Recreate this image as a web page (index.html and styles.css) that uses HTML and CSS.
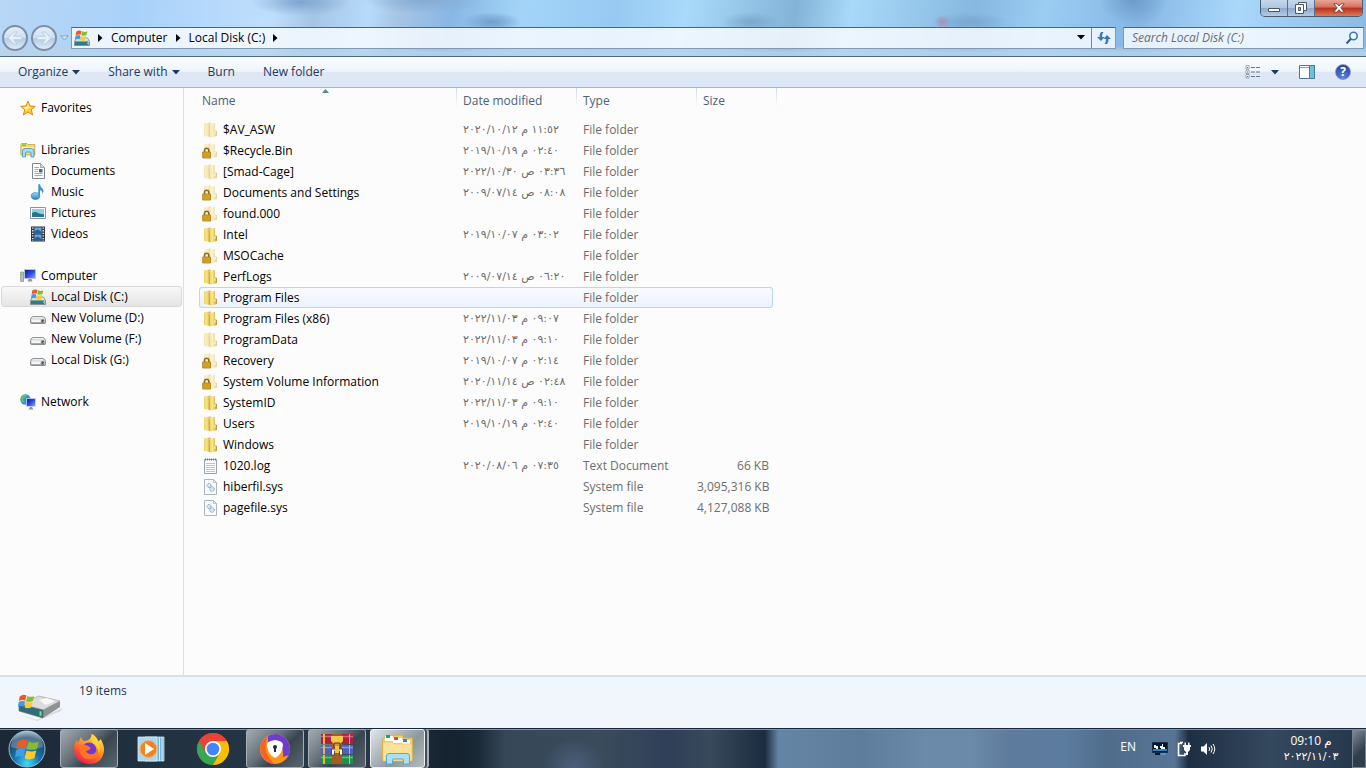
FILE: index.html
```html
<!DOCTYPE html>
<html lang="en">
<head>
    <meta charset="UTF-8">
    <meta name="viewport" content="width=device-width, initial-scale=1.0">
    <title>Local Disk (C:)</title>
    <link rel="stylesheet" href="styles.css">
</head>

<body>
    <svg class="sprite" aria-hidden="true">
        <defs>
            <linearGradient id="gold" x1="0" x2="1"><stop offset="0" stop-color="#efd463"/><stop offset=".45" stop-color="#f8e48a"/><stop offset="1" stop-color="#c79c2b"/></linearGradient>
            <linearGradient id="steel" x1="0" x2="0" y1="0" y2="1"><stop offset="0" stop-color="#fafafa"/><stop offset="1" stop-color="#9a9da0"/></linearGradient>
            <linearGradient id="sky" x1="0" x2="0" y1="0" y2="1"><stop offset="0" stop-color="#9fd8f8"/><stop offset="1" stop-color="#2a83c4"/></linearGradient>
            <linearGradient id="screen" x1="0" x2="1" y1="0" y2="1"><stop offset="0" stop-color="#0a1a9a"/><stop offset=".5" stop-color="#2c49dd"/><stop offset="1" stop-color="#8db4ff"/></linearGradient>
            <linearGradient id="fire" x1=".8" x2=".2" y1="0" y2="1"><stop offset="0" stop-color="#fff14a"/><stop offset=".4" stop-color="#ff9a1f"/><stop offset=".75" stop-color="#ff4438"/><stop offset="1" stop-color="#e6155f"/></linearGradient>
            <radialGradient id="orb" cx=".5" cy=".9" r=".9"><stop offset="0" stop-color="#3fdcff"/><stop offset=".4" stop-color="#1773ad"/><stop offset=".8" stop-color="#1e4666"/><stop offset="1" stop-color="#8fb4cb"/></radialGradient>
        </defs>
        <symbol id="flag" viewBox="0 0 20 20">
            <path fill="#ee5a24" d="M2 4Q6 1 10 3L8.500 9Q5 7.500 1 9.500Z"/>
            <path fill="#84bd2f" d="M11 3.500Q15 5.500 19 3.500L17.500 9.500Q13 11 9.500 9.500Z"/>
            <path fill="#3f9ce5" d="M.8 10.500Q5 8.500 8.300 10.200L6.800 16Q3 14.500 0 16.500Z"/>
            <path fill="#ffc928" d="M9.200 10.700Q13 12.500 17 10.700L15.500 17Q11 19 7.700 16.700Z"/>
        </symbol>
        <symbol id="folder" viewBox="0 0 16 16">
            <path fill="url(#gold)" d="M2 1.500 8.500 .5V15L2 14Z"/>
            <path fill="url(#gold)" d="M7 2 13 1V8L15 9V14L8 15.700Z"/>
            <path stroke="#c39c35" stroke-width=".6" d="M7.500 3V15"/>
            <path stroke="#aa8a40" stroke-width=".8" d="M14 9V12.500"/>
            <path fill="#fffbe0" d="M12.500 9H13.500V12H12.500Z"/>
        </symbol>
        <symbol id="folder-hidden" viewBox="0 0 16 16">
            <use href="#folder" opacity=".5"/>
        </symbol>
        <symbol id="folder-locked" viewBox="0 0 16 16">
            <use href="#folder" opacity=".4"/>
            <path fill="none" stroke="#8b6b20" stroke-width="1.600" d="M2.500 9.500V7A2.200 2.200 0 0 1 6.800 7V9.500"/>
            <path fill="#e5ae20" stroke="#a37a1c" stroke-width=".8" d="M.7 9H8.500V15H.7Z"/>
            <path stroke="#b98a20" stroke-width=".8" d="M1 11H8M1 13H8"/>
        </symbol>
        <symbol id="textfile" viewBox="0 0 16 16">
            <path fill="#fafdff" stroke="#8d979f" stroke-width=".9" d="M2.500 1.500H14.500V15.500H2.500Z"/>
            <path stroke="#a3bacd" stroke-width=".8" d="M4 5.500H13M4 7.500H13M4 9.500H13M4 11.500H13M4 13.500H13"/>
            <path stroke="#70777e" stroke-dasharray="1 1" stroke-width="2" d="M3 1.500H14"/>
        </symbol>
        <symbol id="sysfile" viewBox="0 0 16 16">
            <path fill="#fbfcfd" stroke="#a5adb5" stroke-width=".9" d="M2.500.5H11.500L14.500 3.500V15.500H2.500Z"/>
            <path fill="none" stroke="#a5adb5" stroke-width=".7" d="M11.500.5V3.500H14.500"/>
            <circle cx="7" cy="6.500" r="2" fill="#d9e8f6" stroke="#6f97c6" stroke-dasharray="1 .5"/>
            <circle cx="10" cy="10" r="2.300" fill="#d9e8f6" stroke="#6f97c6" stroke-dasharray="1 .5"/>
        </symbol>
        <symbol id="star" viewBox="0 0 16 16">
            <path fill="#ffcb38" stroke="#e38422" d="M8 1 10 6 15.300 6.300 11.200 9.700 12.700 15 8 12 3.300 15 4.800 9.700.7 6.300 6 6Z"/>
            <path fill="#fff3a0" d="M8 3.500 9 7 12 7.300 8 8.500 5 12 5.800 9.500 3.300 7.200 6.700 7Z"/>
        </symbol>
        <symbol id="libraries" viewBox="0 0 16 16">
            <path fill="#f4d874" stroke="#c5a23f" stroke-width=".8" d="M.8 3V13H14.800V2.500H8L7 1.500H1.500Z"/>
            <path fill="#70b95d" d="M2 2.500H6V4H2Z"/>
            <path fill="#fdf2b6" d="M2 5H14V8H2Z"/>
            <path fill="#a5dcf6" stroke="#3f93c5" stroke-width=".8" d="M2.500 15V9Q2.500 6.500 5 6.500H11.500Q14 6.500 14 9V15H11V11Q11 10 10 10H6.500Q5.500 10 5.500 11V15Z"/>
        </symbol>
        <symbol id="documents" viewBox="0 0 16 16">
            <path fill="#fff" stroke="#7d8790" d="M2.500.5H10.500L14.500 4.500V15.500H2.500Z"/>
            <path fill="#dce3ea" stroke="#7d8790" stroke-width=".7" d="M10.500.5V4.500H14.500"/>
            <path stroke="#7f95aa" stroke-width=".8" d="M4.500 4.500H9M4.500 6.500H8M4.500 8.500H8M4.500 10.500H12.500M4.500 12.500H12.500"/>
            <path fill="#3c6f9f" d="M9 6H12.500V9.500H9Z"/>
        </symbol>
        <symbol id="music" viewBox="0 0 16 16">
            <ellipse cx="5.500" cy="12" rx="4.300" ry="3.400" fill="url(#sky)" stroke="#2079b2" stroke-width=".6"/>
            <path fill="#3098d7" d="M8.300 12V.3H10Q10.300 3 12.500 4.500Q14.500 7 12.300 10Q12.800 7 10 6V12Z"/>
        </symbol>
        <symbol id="pictures" viewBox="0 0 16 16">
            <path fill="#fff" stroke="#8b959e" d="M.5 2.500H15.500V13.500H.5Z"/>
            <path fill="#8bd0f3" d="M2 4H14V12H2Z"/>
            <path fill="#2a7a66" d="M2 8Q5 6 8 8Q11 9.500 14 9V12H2Z"/>
            <path fill="#2374af" d="M2 10.500Q8 9.500 14 10.500V12H2Z"/>
        </symbol>
        <symbol id="videos" viewBox="0 0 16 16">
            <path fill="#30373d" d="M1 .5H15V15.500H1Z"/>
            <path fill="#5ca9e4" d="M4.500 1.500H11.500V7.500H4.500ZM4.500 8.500H11.500V14.500H4.500Z"/>
            <path fill="#2b5d9b" d="M4.500 5 8 3.500 11.500 6V7.500H4.500ZM4.500 12 8 10.500 11.500 13V14.500H4.500Z"/>
            <path stroke="#fff" stroke-dasharray="1.300 1.300" stroke-width="1.300" d="M2.800 1.500V15M13.200 1.500V15"/>
        </symbol>
        <symbol id="computer" viewBox="0 0 16 16">
            <path fill="#bcc4c3" stroke="#7b8784" stroke-width=".7" d="M.7 4H3.500V13.500H.7Z"/>
            <path fill="#62bd50" d="M1.300 6H2.700V7H1.300Z"/>
            <path fill="url(#screen)" stroke="#bac3d5" d="M4.500 1.500H15.500V10.500H4.500Z"/>
            <path fill="#8d97a6" d="M8.500 11H11.500L12.500 13.500H7.500Z"/>
        </symbol>
        <symbol id="osdrive" viewBox="0 0 16 16">
            <path fill="url(#steel)" stroke="#6d7678" stroke-width=".7" d="M2.500 8H13.500L15.500 11.500V15.500H.5V11.500Z"/>
            <path fill="#2e7c87" d="M1 11.500H14V15H1Z"/>
            <path fill="#7be05d" d="M13 12.500H14.500V14H13Z"/>
            <use href="#flag" x="1" y="-1" width="13" height="13"/>
        </symbol>
        <symbol id="drive" viewBox="0 0 16 16">
            <path fill="url(#steel)" stroke="#777d81" stroke-width=".8" d="M3 6.500H13Q15.500 7.500 15.500 9.500V12.500Q15.500 13.500 14.500 13.500H1.500Q.5 13.500.5 12.500V9.500Q.5 7.500 3 6.500Z"/>
            <path fill="#f5f6f6" d="M1.500 9.500H10.500V12H1.500Z"/>
            <path fill="#51575b" d="M11.500 9.500H14V12.500H11.500Z"/>
            <path fill="#75d05c" d="M13 11H14V12H13Z"/>
        </symbol>
        <symbol id="network" viewBox="0 0 16 16">
            <circle cx="5.500" cy="5.500" r="5.200" fill="#2d93d2"/>
            <path fill="#5fc35a" d="M1 4Q3 0 7 1L5 4 3 5 4 8 2 8.500ZM7 5 10 4V7L7 9Z"/>
            <path fill="url(#screen)" stroke="#ced6e8" stroke-width=".8" d="M6.500 4.500H15.500V12.500H6.500Z"/>
            <path fill="#8d97a6" d="M10 13H12L13.500 15.500H8.500Z"/>
        </symbol>
    </svg>

    <header class="titlebar">
        <div class="window-buttons">
            <button class="win-btn" aria-label="Minimize"><svg width="14" height="12" viewBox="0 0 14 12"><path fill="#fff" stroke="#4c5566" d="M1.500 6.500H12.500V9.500H1.500Z"/></svg></button>
            <button class="win-btn" aria-label="Restore"><svg width="12" height="12" viewBox="0 0 12 12"><path fill="#fff" stroke="#4c5566" d="M3.500.5H11.500V8.500H8.500V11.500H.5V2.500H3.500Z"/><path fill="#9fb6d3" stroke="#4c5566" d="M3.500 5.500H5.500V8.500H3.500Z"/><path fill="none" stroke="#4c5566" d="M3.500 2.500H8.500V8.500"/></svg></button>
            <button class="win-btn win-close" aria-label="Close"><svg width="12" height="10" viewBox="0 0 12 10"><path fill="#fff" stroke="#5f3030" stroke-width=".8" d="M.8.800H4L6 3 8 .8H11.200L7.800 4.800 11.300 9.200H8L6 6.700 4 9.200H.7L4.200 4.800Z"/></svg></button>
        </div>
        <div class="nav-row">
            <div class="history">
                <button class="round-btn" aria-label="Back"><svg width="16" height="16" viewBox="0 0 16 16"><path fill="#e6f0fa" stroke="#b3c6d9" stroke-width=".7" d="M1 8 7 2H10L6.500 6.300H15V9.700H6.500L10 14H7Z"/></svg></button>
                <button class="round-btn" aria-label="Forward"><svg width="16" height="16" viewBox="0 0 16 16"><path fill="#e6f0fa" stroke="#b3c6d9" stroke-width=".7" d="M15 8 9 2H6L9.500 6.300H1V9.700H9.500L6 14H9Z"/></svg></button>
                <button class="plain-btn" aria-label="Recent pages"><svg width="9" height="6" viewBox="0 0 9 6"><path fill="#cfe0f0" stroke="#7e9ab5" stroke-width=".8" d="M.8.800H8.200L4.500 5Z"/></svg></button>
            </div>
            <div class="address">
                <svg class="icon address-icon"><use href="#osdrive"/></svg>
                <svg class="crumb-arrow" viewBox="0 0 5 8"><path d="M0 0 4.500 4 0 8Z"/></svg>
                <a class="crumb" href="#">Computer</a>
                <svg class="crumb-arrow" viewBox="0 0 5 8"><path d="M0 0 4.500 4 0 8Z"/></svg>
                <a class="crumb" href="#">Local Disk (C:)</a>
                <svg class="crumb-arrow" viewBox="0 0 5 8"><path d="M0 0 4.500 4 0 8Z"/></svg>
                <button class="plain-btn address-drop" aria-label="Previous locations"><svg width="8" height="5" viewBox="0 0 8 5"><path d="M0 0H8L4 4.500Z"/></svg></button>
                <button class="plain-btn refresh" aria-label="Refresh"><svg width="14" height="14" viewBox="0 0 14 14"><path fill="#3679b4" d="M4 1H6.500Q4.800 3 5 6H7.500L4 10 0 6H2.500Q2.300 3 4 1ZM10 13H7.500Q9.200 11 9 8H6.500L10 4 14 8H11.500Q11.700 11 10 13Z"/></svg></button>
            </div>
            <form class="search">
                <input type="text" aria-label="Search" placeholder="Search Local Disk (C:)">
                <button type="button" class="plain-btn" aria-label="Go"><svg width="14" height="14" viewBox="0 0 14 14"><circle cx="8.500" cy="5" r="3.700" fill="#eef7ff" stroke="#3579b8" stroke-width="1.600"/><path stroke="#2c5f95" stroke-width="2" d="M6 7.800 1.500 12.500"/></svg></button>
            </form>
        </div>
    </header>

    <div class="toolbar">
        <button class="tool">Organize <svg class="tool-arrow" viewBox="0 0 8 5"><path d="M0 0H8L4 4.500Z"/></svg></button>
        <button class="tool">Share with <svg class="tool-arrow" viewBox="0 0 8 5"><path d="M0 0H8L4 4.500Z"/></svg></button>
        <button class="tool">Burn</button>
        <button class="tool">New folder</button>
        <div class="tool-right">
            <button class="tool tool-view" aria-label="Change view"><svg width="16" height="14" viewBox="0 0 16 14"><path fill="#fff" stroke="#8793a5" stroke-width=".8" d="M1 .5H4V4H1ZM1 5H4V8.500H1ZM1 9.500H4V13H1Z"/><path stroke="#526f9b" d="M2 2.500H3M2 7H3M2 11.500H3"/><path stroke="#67788f" stroke-dasharray="4 1" d="M6 2.500H16M6 7H16M6 11.500H16"/></svg><svg class="tool-arrow" viewBox="0 0 8 5"><path d="M0 0H8L4 4.500Z"/></svg></button>
            <button class="tool" aria-label="Show the preview pane"><svg width="16" height="14" viewBox="0 0 16 14"><path fill="#fff" stroke="#5b7293" d="M.5.5H15.500V13.500H.5Z"/><path fill="#72bfdc" stroke="#427c9f" d="M10.500.5H15.500V13.500H10.500Z"/><path stroke="#8ba3c0" d="M1 2.500H10"/></svg></button>
            <button class="help" aria-label="Get help">?</button>
        </div>
    </div>

    <main class="main">
        <nav class="sidebar">
            <a class="side-item" href="#"><svg class="icon"><use href="#star"/></svg>Favorites</a>
            <div class="side-group">
                <a class="side-item" href="#"><svg class="icon"><use href="#libraries"/></svg>Libraries</a>
                <a class="side-item child" href="#"><svg class="icon"><use href="#documents"/></svg>Documents</a>
                <a class="side-item child" href="#"><svg class="icon"><use href="#music"/></svg>Music</a>
                <a class="side-item child" href="#"><svg class="icon"><use href="#pictures"/></svg>Pictures</a>
                <a class="side-item child" href="#"><svg class="icon"><use href="#videos"/></svg>Videos</a>
            </div>
            <div class="side-group">
                <a class="side-item" href="#"><svg class="icon"><use href="#computer"/></svg>Computer</a>
                <a class="side-item child selected" href="#"><svg class="icon"><use href="#osdrive"/></svg>Local Disk (C:)</a>
                <a class="side-item child" href="#"><svg class="icon"><use href="#drive"/></svg>New Volume (D:)</a>
                <a class="side-item child" href="#"><svg class="icon"><use href="#drive"/></svg>New Volume (F:)</a>
                <a class="side-item child" href="#"><svg class="icon"><use href="#drive"/></svg>Local Disk (G:)</a>
            </div>
            <div class="side-group">
                <a class="side-item" href="#"><svg class="icon"><use href="#network"/></svg>Network</a>
            </div>
        </nav>

        <section class="content">
            <table class="files">
                <colgroup><col class="col-name"><col class="col-date"><col class="col-type"><col class="col-size"><col class="col-end"></colgroup>
                <thead>
                    <tr>
                        <th>Name<svg class="sort" viewBox="0 0 7 4"><path d="M3.500 0 7 4H0Z"/></svg></th>
                        <th>Date modified</th>
                        <th>Type</th>
                        <th colspan="2">Size</th>
                    </tr>
                </thead>
                <tbody>
                    <tr><td><svg class="icon"><use href="#folder-hidden"/></svg>$AV_ASW</td><td class="date">١١:٥٢ م ٢٠٢٠/١٠/١٢</td><td>File folder</td><td class="size"></td></tr>
                    <tr><td><svg class="icon"><use href="#folder-locked"/></svg>$Recycle.Bin</td><td class="date">٠٢:٤٠ م ٢٠١٩/١٠/١٩</td><td>File folder</td><td class="size"></td></tr>
                    <tr><td><svg class="icon"><use href="#folder-hidden"/></svg>[Smad-Cage]</td><td class="date">٠٣:٣٦ ص ٢٠٢٢/١٠/٣٠</td><td>File folder</td><td class="size"></td></tr>
                    <tr><td><svg class="icon"><use href="#folder-locked"/></svg>Documents and Settings</td><td class="date">٠٨:٠٨ ص ٢٠٠٩/٠٧/١٤</td><td>File folder</td><td class="size"></td></tr>
                    <tr><td><svg class="icon"><use href="#folder-locked"/></svg>found.000</td><td class="date"></td><td>File folder</td><td class="size"></td></tr>
                    <tr><td><svg class="icon"><use href="#folder"/></svg>Intel</td><td class="date">٠٣:٠٢ م ٢٠١٩/١٠/٠٧</td><td>File folder</td><td class="size"></td></tr>
                    <tr><td><svg class="icon"><use href="#folder-locked"/></svg>MSOCache</td><td class="date"></td><td>File folder</td><td class="size"></td></tr>
                    <tr><td><svg class="icon"><use href="#folder"/></svg>PerfLogs</td><td class="date">٠٦:٢٠ ص ٢٠٠٩/٠٧/١٤</td><td>File folder</td><td class="size"></td></tr>
                    <tr class="hovered"><td><svg class="icon"><use href="#folder"/></svg>Program Files</td><td class="date"></td><td>File folder</td><td class="size"></td></tr>
                    <tr><td><svg class="icon"><use href="#folder"/></svg>Program Files (x86)</td><td class="date">٠٩:٠٧ م ٢٠٢٢/١١/٠٣</td><td>File folder</td><td class="size"></td></tr>
                    <tr><td><svg class="icon"><use href="#folder-hidden"/></svg>ProgramData</td><td class="date">٠٩:١٠ م ٢٠٢٢/١١/٠٣</td><td>File folder</td><td class="size"></td></tr>
                    <tr><td><svg class="icon"><use href="#folder-locked"/></svg>Recovery</td><td class="date">٠٢:١٤ م ٢٠١٩/١٠/٠٧</td><td>File folder</td><td class="size"></td></tr>
                    <tr><td><svg class="icon"><use href="#folder-locked"/></svg>System Volume Information</td><td class="date">٠٢:٤٨ ص ٢٠٢٠/١١/١٤</td><td>File folder</td><td class="size"></td></tr>
                    <tr><td><svg class="icon"><use href="#folder"/></svg>SystemID</td><td class="date">٠٩:١٠ م ٢٠٢٢/١١/٠٣</td><td>File folder</td><td class="size"></td></tr>
                    <tr><td><svg class="icon"><use href="#folder"/></svg>Users</td><td class="date">٠٢:٤٠ م ٢٠١٩/١٠/١٩</td><td>File folder</td><td class="size"></td></tr>
                    <tr><td><svg class="icon"><use href="#folder"/></svg>Windows</td><td class="date"></td><td>File folder</td><td class="size"></td></tr>
                    <tr><td><svg class="icon"><use href="#textfile"/></svg>1020.log</td><td class="date">٠٧:٣٥ م ٢٠٢٠/٠٨/٠٦</td><td>Text Document</td><td class="size">66 KB</td></tr>
                    <tr><td><svg class="icon"><use href="#sysfile"/></svg>hiberfil.sys</td><td class="date"></td><td>System file</td><td class="size">3,095,316 KB</td></tr>
                    <tr><td><svg class="icon"><use href="#sysfile"/></svg>pagefile.sys</td><td class="date"></td><td>System file</td><td class="size">4,127,088 KB</td></tr>
                </tbody>
            </table>
        </section>
    </main>

    <footer class="details">
        <svg class="details-icon" viewBox="0 0 46 30">
            <path fill="#c9c9c9" d="M4 24 20 29 45 17 44 20 20 30Z" opacity=".6"/>
            <path fill="#dcdcdc" stroke="#9a9a9a" stroke-width=".6" d="M2 13 22 5 43 10 26 19Z"/>
            <path fill="#8f9294" d="M26 19 43 10V16L26 27Z"/>
            <path fill="#2c6f7b" stroke="#666" stroke-width=".6" d="M2 13 26 19V27L2 20Z"/>
            <path fill="#8be26a" d="M22.500 20 24.500 20.500V25L22.500 24.500Z"/>
            <path fill="#f8f8f8" d="M22 9 30 7 38 10 29 14Z"/>
            <use href="#flag" x="1" y="2" width="17" height="17"/>
        </svg>
        <span class="count">19 items</span>
    </footer>

    <div class="taskbar">
        <button class="start" aria-label="Start">
            <svg width="38" height="38" viewBox="0 0 38 38"><circle cx="19" cy="19" r="18" fill="url(#orb)" stroke="#9bb9cc"/><path fill="#fff" opacity=".25" d="M3 17A16 16 0 0 1 35 17Q19 22 3 17Z"/><use href="#flag" x="7" y="7" width="25" height="25"/></svg>
        </button>
        <button class="task open" aria-label="Firefox">
            <svg width="32" height="32" viewBox="0 0 32 32">
                <path fill="url(#fire)" d="M19 1Q24 4 25 8Q27 8 27.500 6Q31.500 12 31 18Q29 31 16 31Q3 30 1 18Q.5 11 4 7L5 10 8 4Q9 8 12 8Q18 7 19 1Z"/>
                <circle cx="16" cy="17" r="7.500" fill="#7139d8"/>
                <path fill="#ff7420" d="M6 13Q10 10 15 13L18 15Q16 18 13 18Q15 22 20 21Q24 19 24 15Q27 20 23 24Q17 28 11 25Q6 21 6 13Z"/>
                <path fill="#ffd33a" d="M19 1Q24 4 25 9Q28 14 26 20Q25 12 19 9Q17 6 19 1Z"/>
            </svg>
        </button>
        <button class="task" aria-label="Media Player">
            <svg width="28" height="28" viewBox="0 0 28 28"><path fill="#75b5dc" stroke="#cbe5f4" stroke-width=".8" d="M8 2H27V26H8Z"/><path stroke="#d7effa" d="M22.500 2V26M25 2V26"/><path fill="#a8d7f0" stroke="#d7effa" stroke-width=".8" d="M1 2H20V26H1Z"/><circle cx="11.500" cy="14" r="8.500" fill="#f48220" stroke="#ffb26c"/><path fill="#fff" d="M8 8 17 14 8 20Z"/></svg>
        </button>
        <button class="task" aria-label="Chrome">
            <svg width="34" height="34" viewBox="0 0 34 34"><circle cx="17" cy="17" r="16" fill="#ea4335"/><path fill="#34a853" d="M3.140 9A16 16 0 0 0 17 33L23.900 21 10.100 21Z"/><path fill="#fbbc05" d="M17 33A16 16 0 0 0 30.860 9L17 9 23.900 21Z"/><path fill="#ea4335" d="M3.140 9A16 16 0 0 1 30.860 9H17L10.100 21Z"/><circle cx="17" cy="17" r="8" fill="#fff"/><circle cx="17" cy="17" r="6.300" fill="#4285f4"/></svg>
        </button>
        <button class="task open" aria-label="Secure Browser">
            <svg width="32" height="32" viewBox="0 0 32 32"><circle cx="16" cy="16" r="15" fill="#ff941d"/><path fill="#6e3cce" d="M9 3Q19-2 27 6Q33 13 30 22L24 24Q26 9 9 9Z"/><path fill="#f56425" d="M9 3Q-1 9 2 20Q5 29 15 31L9 23Q4 15 9 3Z"/><path fill="#fff" d="M16 7Q24 8 24 12Q23 22 16 25Q9 22 8 12Q8 8 16 7Z"/><circle cx="16" cy="14" r="2" fill="#242743"/><path fill="#242743" d="M15 14H17V19H15Z"/></svg>
        </button>
        <button class="task open" aria-label="WinRAR">
            <svg width="34" height="32" viewBox="0 0 34 32"><path fill="#b51d3c" d="M1 1H33V11H1Z"/><path fill="#4d5fc7" d="M1 12H33V21H1Z"/><path fill="#1d9147" d="M1 22H33V31H1Z"/><path stroke="#fff" opacity=".35" stroke-width="1.500" d="M1 3.500H33M1 14.500H33M1 24.500H33"/><path fill="#e7bb34" d="M3 1H5V11H3ZM3 12H5V21H3ZM3 22H5V31H3ZM29 1H30V11H29ZM29 12H30V21H29ZM29 22H30V31H29Z"/><path fill="#a85b24" d="M12 1H22V31H12Z"/><path fill="#f6c749" d="M11 3H23V8L20 11H14L11 8Z"/><path fill="#d4932d" stroke="#5c3510" d="M14 10H20V15H14Z"/><path fill="#f5f5f5" stroke="#505050" d="M11.500 16V22H14.500V18H19.500V22H22.500V16Z"/><path fill="#efc442" d="M15 13H19V20H15Z"/></svg>
        </button>
        <button class="task open active" aria-label="Explorer">
            <svg width="34" height="32" viewBox="0 0 34 32"><path fill="#f0cf70" stroke="#d3ac4b" d="M1.500 6V27H31.500V5H23L21 2H13L11 4H4L2 6Z"/><path fill="#fff" d="M4 3H12V8H4ZM12 5H21V10H12ZM21 7H29V11H21Z"/><path fill="#29a252" d="M5 2H9V5H5Z"/><path fill="#d85032" d="M13 4H17V7H13Z"/><path fill="#3089cc" d="M22 6H26V9H22Z"/><path fill="#fbe29b" stroke="#e2c067" stroke-width=".6" d="M2 9H11L13 11H31V28H2Z"/><path fill="#a9e1f5" stroke="#57abc9" d="M5.500 31V23Q5.500 20.500 8 20.500H26Q28.500 20.500 28.500 23V31H22.500V27Q22.500 26 21 26H13Q11.500 26 11.500 27V31Z"/></svg>
        </button>
        <div class="tray">
            <button class="lang">EN</button>
            <div class="tray-icons">
                <svg width="16" height="14" viewBox="0 0 16 14"><path fill="#081522" stroke="#16304a" d="M.5.5H15.500V10.500H.5Z"/><path fill="#2684ca" d="M1 7H15V9H1Z"/><path fill="#e5f6ff" d="M2 3H4V4H6V7H4V6H2ZM8 4H10V2H11V5H13V7H9V6H8Z"/><path fill="#0b1118" d="M3 11H8V13H3Z"/><path fill="#3f9ade" d="M9 11H14V13H9Z"/></svg>
                <svg width="14" height="16" viewBox="0 0 14 16"><path fill="none" stroke="#fff" stroke-width="1.600" d="M5 2.500H1.500V14.500H8V12M3 1.500H6"/><path fill="#fff" d="M6 4H7.500V1.500H9V4H11V1.500H12.500V4H14V6H13V9L11 11V14H9V11L7 9V6H6Z"/></svg>
                <svg width="16" height="16" viewBox="0 0 16 16"><path fill="#fff" d="M1 5.500H3.500L7 2V14L3.500 10.500H1Z"/><path fill="none" stroke="#fff" d="M9 6Q10.500 8 9 10M11 4.500Q13.500 8 11 11.500M13 3Q16.500 8 13 13"/></svg>
            </div>
            <div class="clock"><span>09:10 م</span><span class="clock-date">٢٠٢٢/١١/٠٣</span></div>
            <button class="show-desktop" aria-label="Show desktop"></button>
        </div>
    </div>
</body>
</html>
```
FILE: styles.css
```css
* {
    box-sizing: border-box;
}

body {
    margin: 0;
    height: 100vh;
    display: flex;
    flex-direction: column;
    overflow: hidden;
    font-family: "Open Sans", "DejaVu Sans", sans-serif;
    font-size: 12px;
    line-height: 16px;
    color: #000;
    background: #fcfcfc;
}

button,
input {
    font: inherit;
    color: inherit;
    margin: 0;
    padding: 0;
    border: none;
    background: none;
}

a {
    color: inherit;
    text-decoration: none;
}

svg {
    flex: none;
}

.sprite {
    position: absolute;
    width: 0;
    height: 0;
}

.icon {
    width: 16px;
    height: 16px;
}

.plain-btn {
    display: flex;
    align-items: center;
    justify-content: center;
}

/* title bar */
.titlebar {
    height: 57px;
    flex: none;
    display: flex;
    flex-direction: column;
    border-bottom: 1px solid #51698a;
    background:
        radial-gradient(ellipse 50px 14px at 22% 2px, #7fa6d0, transparent),
        radial-gradient(ellipse 60px 14px at 31% 0, #86abd3, transparent),
        radial-gradient(ellipse 30px 10px at 36% 22px, #6d9dc9, transparent),
        radial-gradient(ellipse 30px 10px at 55% 22px, #7aa8ce, transparent),
        radial-gradient(ellipse 8px 7px at 69% 22px, #a890b5, transparent),
        radial-gradient(ellipse 40px 10px at 71% 22px, #78a8d1, transparent),
        radial-gradient(ellipse 35px 26px at 83% 0, #6e9cca, transparent),
        linear-gradient(to bottom, transparent 46px, rgba(184, 212, 233, 0.8) 52px),
        linear-gradient(100deg, #b8d6f5 0, #a9d2fa 10%, #c0defc 20%, #a5c5e5 23%, #b8dafa 27%, #a7c6e6 29%, #88b7e4 33%, #a3d4f8 38%, #98c9f1 45%, #a9dafa 50%, #83b3d7 58%, #a8d9f9 62%, #86b8e0 71%, #9bcdf3 76%, #86b7e5 83%, #aad8fa 90%, #8cb9e3 100%);
}

.window-buttons {
    display: flex;
    align-self: flex-end;
    height: 18px;
    margin-right: 3px;
    border: 1px solid #4a5a70;
    border-top: none;
    border-radius: 0 0 5px 5px;
    overflow: hidden;
}

.win-btn {
    width: 27px;
    display: flex;
    align-items: center;
    justify-content: center;
    border-right: 1px solid #5c708c;
    background: linear-gradient(#c5d8ec 0, #aec5e0 50%, #8ca8cb 50%, #b2cbe6 100%);
}

.win-close {
    width: 47px;
    border-right: none;
    background: linear-gradient(#e8a597 0, #d3705f 45%, #b9301b 50%, #dc7c56 100%);
}

.nav-row {
    display: flex;
    align-items: center;
    height: 40px;
    padding: 2px 2px 0 0;
}

.history {
    display: flex;
    align-items: center;
    gap: 3px;
    width: 71px;
    padding-left: 2px;
}

.round-btn {
    display: flex;
    align-items: center;
    justify-content: center;
    width: 26px;
    height: 26px;
    border: 2px solid #7d8fa6;
    border-radius: 50%;
    background: linear-gradient(#e3edf7 0, #d0dff0 50%, #b2cae3 50%, #dcebfa 100%);
}

.address,
.search {
    display: flex;
    align-items: center;
    height: 22px;
    border: 1px solid #8199b5;
    border-top-color: #50637c;
    background: rgba(247, 250, 255, 0.85);
}

.address {
    flex: 1;
    margin-right: 7px;
    padding-left: 2px;
}

.address-icon {
    margin-right: 8px;
}

.crumb-arrow {
    width: 5px;
    height: 8px;
}

.crumb {
    padding: 0 8px;
}

.address-drop {
    margin-left: auto;
    width: 20px;
    height: 20px;
}

.refresh {
    width: 24px;
    height: 20px;
    border-left: 1px solid #7489a4;
}

.search {
    width: 241px;
    padding: 0 4px 0 8px;
}

.search input {
    flex: 1;
    min-width: 0;
    outline: none;
}

.search input::placeholder {
    color: #6d6d6d;
    font-style: italic;
    opacity: 1;
}

/* command bar */
.toolbar {
    height: 31px;
    flex: none;
    display: flex;
    align-items: center;
    padding: 0 15px 0 18px;
    color: #1e395b;
    border-bottom: 1px solid #a5b4cb;
    background: linear-gradient(#fcfeff 0, #eef4fc 48%, #dfe7f5 50%, #dae6f5 100%);
}

.tool {
    display: flex;
    align-items: center;
    margin-right: 28px;
}

.tool-arrow {
    width: 8px;
    height: 5px;
    margin-left: 4px;
    fill: #1e395b;
}

.tool-right {
    display: flex;
    align-items: center;
    margin-left: auto;
}

.tool-right .tool {
    margin-right: 20px;
}

.tool-view .tool-arrow {
    margin-left: 10px;
}

.help {
    width: 16px;
    height: 16px;
    border: 1px solid #8f9bb3;
    border-radius: 50%;
    color: #fff;
    font-weight: bold;
    line-height: 14px;
    background: radial-gradient(circle at 50% 90%, #5c86e8, #20368f);
}

/* main area */
.main {
    flex: 1;
    min-height: 0;
    display: flex;
}

.sidebar {
    width: 184px;
    flex: none;
    padding: 9px 1px;
    border-right: 1px solid #d6e0f0;
}

.side-group {
    margin-top: 21px;
}

.side-item {
    display: flex;
    align-items: center;
    gap: 5px;
    height: 21px;
    padding-left: 18px;
    border: 1px solid transparent;
    border-radius: 3px;
}

.side-item.child {
    padding-left: 28px;
}

.side-item.selected {
    border-color: #d9d9d9;
    background: linear-gradient(#f8f8f8, #e5e5e5);
}

.content {
    flex: 1;
    padding-left: 15px;
}

.files {
    table-layout: fixed;
    width: 578px;
    border-spacing: 0;
}

.col-name {
    width: 258px;
}

.col-date,
.col-type {
    width: 120px;
}

.col-end {
    width: 4px;
}

.files th {
    height: 31px;
    padding: 0 0 5px 6px;
    text-align: left;
    font-weight: normal;
    color: #4c607a;
    background: linear-gradient(#cfdced, #fcfcfc) right top / 1px 20px no-repeat;
}

.files th:first-child {
    position: relative;
    padding-left: 3px;
}

.sort {
    position: absolute;
    top: 1px;
    left: 50%;
    margin-left: -6px;
    width: 7px;
    height: 4px;
    fill: #5c83a6;
}

.files td {
    height: 21px;
    padding: 0 0 0 6px;
    border: solid transparent;
    border-width: 1px 0;
    line-height: 16px;
    color: #6d6d6d;
    white-space: nowrap;
}

.files td:first-child {
    padding-left: 2px;
    border-left-width: 1px;
    color: #000;
}

.files .size {
    padding: 0 3px 0 0;
    border-right-width: 1px;
    text-align: right;
}

.files td .icon {
    display: inline-block;
    margin-right: 5px;
    vertical-align: top;
}

.files .date {
    font-family: "DejaVu Sans", sans-serif;
    font-size: 11px;
}

.files .hovered td {
    border-color: #b8d6fb;
    background: linear-gradient(#fafbfd, #ebf3fd);
}

.files .hovered td:first-child {
    border-radius: 3px 0 0 3px;
}

.files .hovered .size {
    border-radius: 0 3px 3px 0;
}

/* details pane */
.details {
    height: 53px;
    flex: none;
    display: flex;
    padding: 6px 17px;
    color: #1e395b;
    border-top: 2px solid #d5dfeb;
    background: #f1f5fc;
}

.details-icon {
    width: 46px;
    height: 30px;
    margin: 8px 16px 0 0;
}

/* taskbar */
.taskbar {
    height: 40px;
    flex: none;
    display: flex;
    gap: 4px;
    border-top: 1px solid #15263c;
    box-shadow: inset 0 1px #8093a5;
    background:
        radial-gradient(ellipse 30px 30px at 42% 100%, #4c607c, transparent),
        linear-gradient(to right, #1b2937 0, #2a3a49 26%, #15222f 33%, #1a2937 35%, #364758 37%, #3a4b5c 44%, #303f58 49%, #38495b 52%, #1c2c40 56%, #6585a5 57%, #5e7c9b 63%, #6b89a9 68%, #6b89a9 71%, #5e7b9c 74%, #5c7ca0 78%, #4f6c8b 81%, #587596 86%, #1e2f43 87%, #34485e 93%, #24364a 100%);
}

.start {
    width: 56px;
    padding-right: 2px;
    display: flex;
    align-items: center;
    justify-content: center;
}

.task {
    width: 58px;
    display: flex;
    align-items: center;
    justify-content: center;
    border: 1px solid transparent;
    border-radius: 3px;
}

.task.open {
    border-color: #a6adb3;
    background: linear-gradient(135deg, #a3abb1 0, #66717b 40%, #39454f 60%, #59656f 100%);
}

.task.active {
    width: 55px;
    border-color: #eef1f3;
    background: linear-gradient(135deg, #e2e5e7, #8c979f 60%, #b3bcc2);
    box-shadow: 2px 0 #454f58, 4px 0 #a7afb6;
}

.tray {
    margin-left: auto;
    display: flex;
    align-items: center;
    color: #fff;
}

.lang {
    padding-bottom: 4px;
    margin-right: 16px;
}

.tray-icons {
    display: flex;
    align-items: center;
    gap: 9px;
    margin-right: 66px;
}

.clock {
    display: flex;
    flex-direction: column;
    align-items: center;
    width: 58px;
    margin-right: 12px;
    white-space: nowrap;
}

.clock-date {
    font-family: "DejaVu Sans", sans-serif;
    font-size: 11px;
}

.show-desktop {
    width: 14px;
    height: 38px;
    border: 1px solid #75828f;
    background: linear-gradient(135deg, #7d8994, #303e4c 60%);
}
```
